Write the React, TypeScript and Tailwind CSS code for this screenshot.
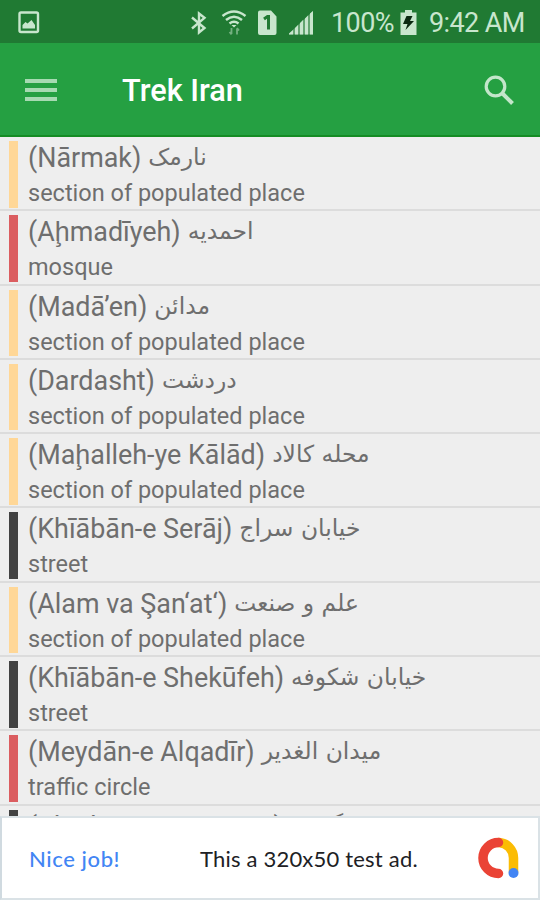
const PLACE = "section of populated place";

type Row = { name: string; local: string; kind?: string; bar: string };

const rows: Row[] = [
  { name: "(Nārmak)", local: "نارمک", kind: PLACE, bar: "bg-[#ffd797]" },
  { name: "(Aḩmadīyeh)", local: "احمدیه", kind: "mosque", bar: "bg-[#db5d60]" },
  { name: "(Madā’en)", local: "مدائن", kind: PLACE, bar: "bg-[#ffd797]" },
  { name: "(Dardasht)", local: "دردشت", kind: PLACE, bar: "bg-[#ffd797]" },
  { name: "(Maḩalleh-ye Kālād)", local: "محله کالاد", kind: PLACE, bar: "bg-[#ffd797]" },
  { name: "(Khīābān-e Serāj)", local: "خیابان سراج", kind: "street", bar: "bg-[#424242]" },
  { name: "(Alam va Şan‘at‘)", local: "علم و صنعت", kind: PLACE, bar: "bg-[#ffd797]" },
  { name: "(Khīābān-e Shekūfeh)", local: "خیابان شکوفه", kind: "street", bar: "bg-[#424242]" },
  { name: "(Meydān-e Alqadīr)", local: "میدان الغدیر", kind: "traffic circle", bar: "bg-[#db5d60]" },
  { name: "(Khīābān-e Gomnām)", local: "خیابان گمنام", bar: "bg-[#424242]" },
];

function StatusBar() {
  return (
    <div className="flex h-[43px] shrink-0 items-center bg-[#207a33] pt-[2px] text-[#c8e6cd]">
      <svg className="ml-[18px] h-[23px] w-[22px]" viewBox="0 0 22 23">
        <rect x="1.5" y="1.5" width="18.5" height="19.5" rx="1.5" fill="none" stroke="currentColor" strokeWidth="2.4" />
        <path d="M4.500 17.500v-3.500l3-3 2 1.500 4-3.500 3.500 5v3.500z" fill="currentColor" />
      </svg>
      <svg className="ml-[150px] h-[24px] w-[18px]" viewBox="0 0 18 24">
        <path d="M2 6.500 14.500 17 9 21.500V2.500l5.500 4.300L2 17.500" fill="none" stroke="currentColor" strokeWidth="2.400" />
      </svg>
      <svg className="ml-[13px] h-[26px] w-[26px]" viewBox="0 0 26 26">
        <g fill="none" stroke="currentColor" strokeWidth="2.500">
          <path d="M1.500 6Q13-3 24.500 6M5 10Q13 3.500 21 10M8.500 13.500Q13 10 17.500 13.500" />
        </g>
        <path d="M10.500 15h5L13 17.500z" fill="currentColor" />
        <path d="M10.500 18v6M8.500 22l2 2.500M16 24.500v-6M18 20.500l-2-2.500" fill="none" stroke="currentColor" strokeWidth="1.800" opacity=".5" />
      </svg>
      <svg className="ml-[11px] h-[26px] w-[19px]" viewBox="0 0 19 26">
        <path d="M2 .5h11l5.500 6V23a2 2 0 0 1-2 2H2a2 2 0 0 1-2-2V2.500a2 2 0 0 1 2-2z" fill="currentColor" />
        <path d="M6 9l3.500-2.500h1V19.500" fill="none" stroke="#207a33" strokeWidth="3" />
      </svg>
      <svg className="ml-[12px] h-[25px] w-[25px]" viewBox="0 0 25 25">
        <path d="M0 24.500v-1L24 1v23.500z" fill="currentColor" opacity=".4" />
        <path d="M0 24.500v-1l4-3.500v4.500zM6 24.500v-6.500l3-3v9.500zM11 24.500V13l3-3v14.500zM16 24.500V8.500l3-3v19zM21 24.500V3.500L24 1v23.500z" fill="currentColor" />
      </svg>
      <span className="ml-[17px] w-[66px] pt-px text-[27px] leading-none tracking-[-0.6px] whitespace-nowrap">100%</span>
      <svg className="ml-[3px] h-[26px] w-[17px]" viewBox="0 0 17 26">
        <path d="M5 0h7v2.500h4.500V25H.5V2.500H5z" fill="currentColor" />
        <path d="M6.500 6h6L10 11h4L5.500 20l2-6H3z" fill="#0b2911" />
      </svg>
      <span className="ml-[12px] pt-px text-[27px] leading-none tracking-[-0.6px] whitespace-nowrap">9:42 AM</span>
    </div>
  );
}

function Toolbar() {
  return (
    <header className="flex h-[94px] shrink-0 items-center border-b-2 border-[#158c24] bg-[#25a042] pt-[1px]">
      <button type="button" aria-label="Menu" className="ml-[25px] flex w-8 flex-col gap-[5px]">
        <span className="h-1 bg-[#a7dab2]" />
        <span className="h-1 bg-[#a7dab2]" />
        <span className="h-1 bg-[#a7dab2]" />
      </button>
      <h1 className="ml-[65px] pt-[4px] text-[30.7px] leading-none font-medium text-white">Trek Iran</h1>
      <button type="button" aria-label="Search" className="mr-[26px] ml-auto">
        <svg className="h-[30px] w-[30px]" viewBox="0 0 30 30" fill="none" stroke="#c3e6ca" strokeWidth="3.200">
          <circle cx="11.500" cy="11.500" r="9.300" />
          <path d="M18 18l10.500 10.500" strokeWidth="4" />
        </svg>
      </button>
    </header>
  );
}

function PlaceRow({ row }: { row: Row }) {
  return (
    <li className="flex h-[74.3px] shrink-0 border-b-2 border-[#dcdcdc] pt-1 pl-[9px]">
      <div className={`h-[66.500px] w-[9px] shrink-0 ${row.bar}`} />
      <div className="ml-[10px] pt-px whitespace-nowrap text-[#6e6e6e]">
        <div className="flex h-8 items-center gap-[7px] text-[26.9px] leading-8">
          <span>{row.name}</span>
          <span dir="rtl" className="pb-[2px] font-['DejaVu_Sans',sans-serif] text-[23.4px]">{row.local}</span>
        </div>
        {row.kind ? <div className="mt-px text-[23.5px] leading-9">{row.kind}</div> : null}
      </div>
    </li>
  );
}

function AdBanner() {
  return (
    <div className="flex h-[84px] shrink-0 items-center border-2 border-[#dae2e6] border-l-[#d0dae0] bg-white font-[Lato,sans-serif] text-[22px]">
      <span className="ml-[27px] w-[171px] font-medium tracking-[0.6px] text-[#4285f4]">Nice job!</span>
      <span className="tracking-[0.2px] whitespace-nowrap text-[#202124]">This a 320x50 test ad.</span>
      <svg className="mr-[18px] ml-auto h-[42px] w-[42px]" viewBox="0 0 42 42" fill="none" strokeLinecap="round" strokeWidth="9.500">
        <path d="M21 5.500A15.500 15.500 0 0 1 35.500 21v14" stroke="#fbbc04" />
        <path d="M20.500 5.500a15.500 15.500 0 0 0 0 31" stroke="#ea4335" />
        <circle cx="35.500" cy="36" r="5" fill="#4285f4" />
      </svg>
    </div>
  );
}

export default function App() {
  return (
    <div className="flex h-[900px] w-[540px] flex-col overflow-hidden bg-[#eeeeee] font-[Roboto,sans-serif]">
      <StatusBar />
      <Toolbar />
      <ul className="flex min-h-0 flex-1 flex-col overflow-hidden">
        {rows.map((row) => (
          <PlaceRow key={row.name} row={row} />
        ))}
      </ul>
      <AdBanner />
    </div>
  );
}
